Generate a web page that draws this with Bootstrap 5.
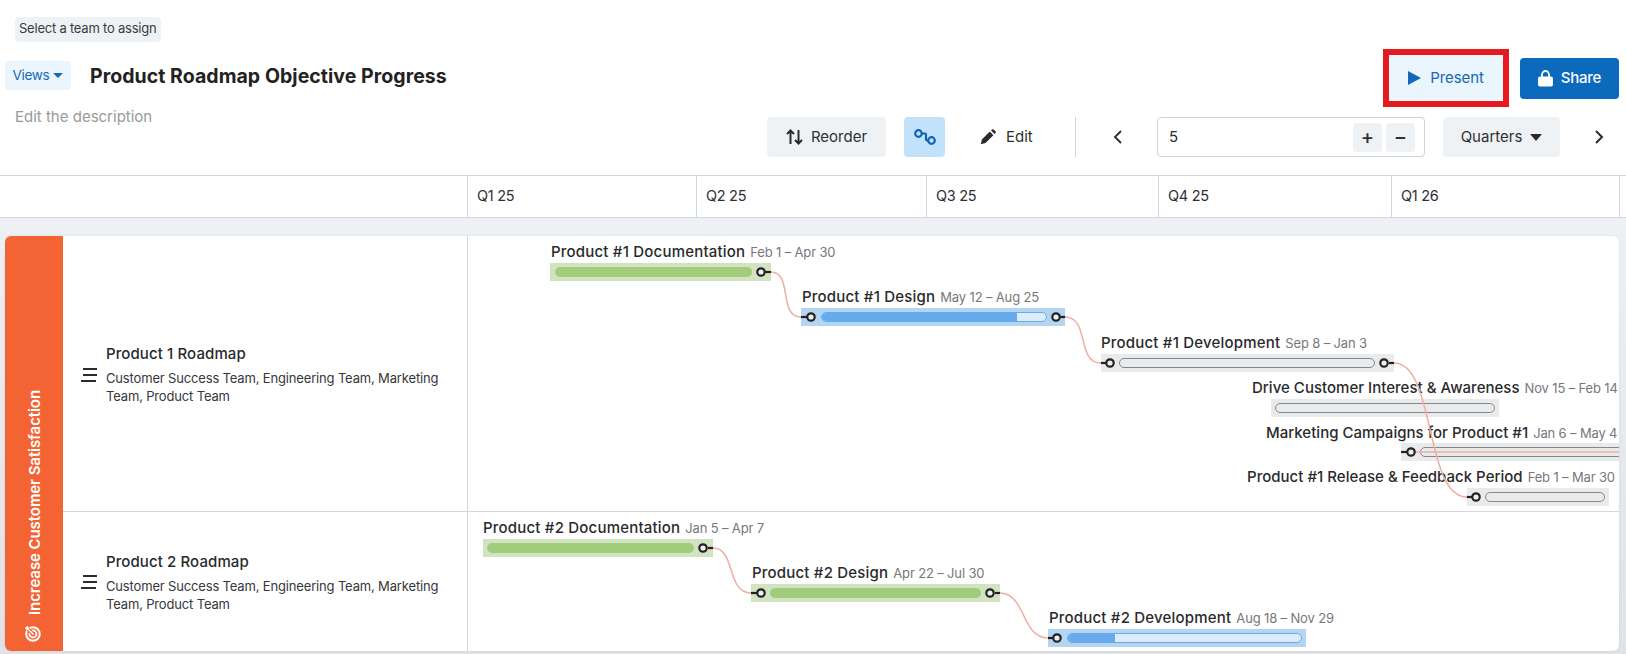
<!doctype html>
<html lang="en"><head><meta charset="utf-8"><title>Roadmap</title>
<link href="https://cdn.jsdelivr.net/npm/bootstrap@5.3.0/dist/css/bootstrap.min.css" rel="stylesheet">
<style>
html,body{height:100%;overflow:hidden}
body{font-family:"Inter","Liberation Sans",sans-serif;color:#2b2b2e;background:#fff;width:1626px;height:654px}
.topzone{height:175px;padding:17px 7px 0 5px}
.teampill{display:block;width:fit-content;margin-left:10px;height:25px;line-height:23px;padding:0 5px 0 4px;background:#eff2f5;border-radius:4px;font-size:13px;letter-spacing:-.22px;color:#3a3a3d}
.headrow{margin-top:14px;height:50px}
.viewsbtn{height:29px;width:66px;padding:0;background:#ebf5fd;color:#1468b5;border:0;border-radius:4px;font-size:13.5px;letter-spacing:-.3px;margin-top:5px}
.viewsbtn::after{content:"";display:inline-block;margin-left:4px;vertical-align:2px;border-left:5px solid transparent;border-right:5px solid transparent;border-top:5px solid currentColor;border-radius:1px}
.qbtn::after{content:"";display:inline-block;margin-left:4px;vertical-align:1px;border-left:6.5px solid transparent;border-right:6.5px solid transparent;border-top:7px solid #2b2b2e;border-radius:1px}
.plantitle{margin:6px 0 0 19px;font-size:19.5px;font-weight:700;line-height:29px;color:#222;letter-spacing:.05px}
.presentwrap{border:6px solid #e5191f;width:126px;height:58px;margin-top:-7px;margin-right:11px}
.presentbtn{width:100%;height:100%;border:0;border-radius:5px;background:#ebf5fd;color:#1468b5;font-size:15px;letter-spacing:-.1px;padding:0;gap:9px}
.sharebtn{width:99px;height:41px;margin-top:2px;background:#0b6abc;color:#fff;border:0;border-radius:4px;font-size:15px;font-weight:500;letter-spacing:-.25px;padding:0}
.descline{margin:1px 0 0 10px;font-size:15px;color:#999;line-height:20px}
.toolrow{margin-top:-10px;height:40px}
.greybtn{height:40px;background:#eff2f5;border:0;border-radius:4px;color:#303033;font-size:15px;padding:0}
.reorderbtn{width:119px}
.linkbtn{width:41px;margin-left:18px;background:#c2e1fb}
.editbtn{width:130px;background:transparent;padding-left:35px;gap:10px}
.vrule{width:1px;height:40px;background:#d4d6d9;margin:0 34px 0 0}
.stepinput{width:268px;height:40px;border:1px solid #cfd2d6;border-radius:4px;margin:0 18px 0 33px;padding:0 9px 0 11px;font-size:15px}
.stepbtn{width:29px;height:29px;background:#eff2f5;border:0;border-radius:4px;padding:0;font-size:20px;font-weight:500;line-height:27px;color:#303033}
.qbtn{width:117px}
.chev{width:14px;height:40px;display:flex;align-items:center;justify-content:center}
.chevend{margin:0 13px 0 32px}
.quarterbar{height:43px;border-top:1px solid #d4d6d9;border-bottom:1px solid #d4d6d9;display:flex}
.quarterlead{width:468px;border-right:1px solid #d4d6d9}
.quartercell{border-right:1px solid #d4d6d9;font-size:14.5px;line-height:40px;padding-left:9px;letter-spacing:-.3px;color:#2f2f33}
.boardzone{height:436px;background:linear-gradient(#eef1f4,#dfe3e6);padding:18px 7px 3px 5px}
.boardcard{height:415px;background:#fff;border-radius:6px;overflow:hidden;box-shadow:0 0 3px rgba(0,0,0,.08)}
.goalband{width:58px;background:#f46333;color:#fff;display:flex;flex-direction:column;align-items:center;justify-content:flex-end;padding:0 0 9px 0}
.goaltext{writing-mode:vertical-rl;transform:rotate(180deg);font-size:15px;font-weight:600;letter-spacing:-.08px;white-space:nowrap;margin:0 0 10px 3px}
.goalicon{margin-right:4px}
.rowone{height:275px}
.rowtwo{height:140px;border-top:1px solid #d4d6d9}
.leadcell{width:405px;flex:none;border-right:1px solid #d4d6d9;display:flex;align-items:center;padding-left:18px;padding-right:25px;gap:9px}
.rowone .leadcell{padding-top:2px}
.rowtwo .leadcell{padding-top:1px}
.roadname{font-size:15px;font-weight:500;line-height:20px;letter-spacing:.1px;color:#2a2a2d;margin-bottom:5px}
.roadteams{font-size:13px;line-height:18px;letter-spacing:-.16px;color:#37373a}
.planecanvas{position:relative;flex:1;overflow:hidden}
.planecanvas svg{position:absolute;left:0;top:0;width:100%;height:100%;pointer-events:none}
.barlabel{position:absolute;white-space:nowrap;font-size:15px;font-weight:500;line-height:18px;letter-spacing:.2px;color:#2a2a2d}
.barlabel.snug{letter-spacing:.02px}
.barlabel span{font-size:13px;font-weight:400;color:#77777c;letter-spacing:-.15px;margin-left:5px}
.barband{position:absolute;height:18px}
.barpill{position:absolute;top:4px;height:10px;border-radius:5px;overflow:hidden}
.tonegreen{background:#d2e3c2}.tonegreen .barpill{background:#a0cc7c}
.toneblue{background:#b4d5f2}.toneblue .barpill{background:#dcecfb;border:1px solid #68abec}
.toneblue .barfill{height:100%;background:#68abec}
.tonegrey{background:#e9eaec}.tonegrey .barpill{background:#e9eaec;border:1px solid #85878b}
.knobs{fill:#eef0f0;stroke:#222;stroke-width:2.2}
.wires{fill:none;stroke:#ecb0a3;stroke-width:1.5}
</style></head><body>
<div class="topzone">
 <div class="teampill">Select a team to assign</div>
 <div class="headrow d-flex align-items-start">
  <button class="viewsbtn" type="button">Views</button>
  <h1 class="plantitle">Product Roadmap Objective Progress</h1>
  <div class="ms-auto d-flex align-items-start">
   <div class="presentwrap"><button class="presentbtn d-flex align-items-center justify-content-center" type="button"><svg width="13" height="14" viewBox="0 0 13 14"><path d="M0 0 13 7 0 14z" fill="#1468b5"/></svg>Present</button></div>
   <button class="sharebtn d-flex align-items-center justify-content-center gap-2" type="button"><svg width="15" height="17" viewBox="0 0 15 17"><path d="M4 7V4.500a3.500 3.500 0 0 1 7 0V7" fill="none" stroke="#fff" stroke-width="1.800"/><rect x="0" y="6.500" width="15" height="10" rx="2" fill="#fff"/></svg>Share</button>
  </div>
 </div>
 <div class="descline">Edit the description</div>
 <div class="toolrow d-flex justify-content-end align-items-center">
  <button class="greybtn reorderbtn d-flex align-items-center justify-content-center gap-2" type="button"><svg width="17" height="16" viewBox="0 0 17 16" fill="none" stroke="#2b2b2e" stroke-width="2"><path d="M4.500 15V2M1 5l3.500-3.500L8 5M12.500 1v13M9 11l3.500 3.500L16 11"/></svg>Reorder</button>
  <button class="greybtn linkbtn d-flex align-items-center justify-content-center" type="button"><svg width="22" height="16" viewBox="0 0 22 16" fill="none" stroke="#0f64b0" stroke-width="2.200"><circle cx="4.500" cy="4.500" r="3.300"/><circle cx="17.500" cy="11.500" r="3.300"/><path d="M8 4.500h3a1 1 0 0 1 1 1v5a1 1 0 0 0 1 1h1"/></svg></button>
  <button class="greybtn editbtn d-flex align-items-center" type="button"><svg width="16" height="16" viewBox="0 0 16 16"><path d="M.8 15.200l1.100-4.700L9.800 2.600l3.600 3.600-7.900 7.900z" fill="#2b2b2e"/><path d="M11 1.400 12 .5a1.300 1.300 0 0 1 1.700 0l1.800 1.800a1.300 1.300 0 0 1 0 1.700l-1 1z" fill="#2b2b2e"/></svg>Edit</button>
  <div class="vrule"></div>
  <div class="chev"><svg width="9" height="14" viewBox="0 0 9 14" fill="none" stroke="#2b2b2e" stroke-width="1.800"><path d="M8 1 2 7l6 6"/></svg></div>
  <div class="stepinput d-flex align-items-center"><span class="me-auto">5</span><button class="stepbtn me-1" type="button">+</button><button class="stepbtn" type="button">−</button></div>
  <button class="greybtn qbtn" type="button">Quarters<span class="ms-1"></span></button>
  <div class="chev chevend"><svg width="9" height="14" viewBox="0 0 9 14" fill="none" stroke="#2b2b2e" stroke-width="2"><path d="M1 1l6 6-6 6"/></svg></div>
 </div>
</div>
<div class="quarterbar">
 <div class="quarterlead"></div>
 <div class="quartercell" style="width:229px">Q1 25</div>
 <div class="quartercell" style="width:230px">Q2 25</div>
 <div class="quartercell" style="width:232px">Q3 25</div>
 <div class="quartercell" style="width:233px">Q4 25</div>
 <div class="quartercell" style="width:228px">Q1 26</div>
</div>
<div class="boardzone">
 <div class="boardcard d-flex">
  <div class="goalband">
   <div class="goaltext">Increase Customer Satisfaction</div>
   <svg class="goalicon" width="17" height="17" viewBox="0 0 17 17" fill="none"><circle cx="9" cy="9" r="6.800" stroke="#fff" stroke-width="2"/><circle cx="9" cy="9" r="3.500" stroke="#fff" stroke-width="1.800"/><circle cx="9" cy="9" r="1" fill="#fff"/><path d="M9 9 2 2" stroke="#f46333" stroke-width="3.500"/><path d="M9 9 4 4" stroke="#fff" stroke-width="1.300"/><path d="M.8 3.300 3.300.8 5 3 5 5 3 5z" fill="#fff"/></svg>
  </div>
  <div class="flex-grow-1 d-flex flex-column">
   <div class="rowone d-flex">
    <div class="leadcell">
     <svg width="16" height="14" viewBox="0 0 16 14" fill="#2b2b2e" class="flex-shrink-0"><rect x="2" y="0" width="14" height="2"/><rect x="2" y="6" width="14" height="2"/><rect x="0" y="12" width="15" height="2"/></svg>
     <div><div class="roadname">Product 1 Roadmap</div><div class="roadteams">Customer Success Team, Engineering Team, Marketing Team, Product Team</div></div>
    </div>
    <div class="planecanvas">
     <div class="barlabel" style="left:83px;top:7px">Product #1 Documentation<span>Feb 1 – Apr 30</span></div>
     <div class="barband tonegreen" style="left:82px;top:27px;width:221px"><div class="barpill" style="left:5px;width:197px"></div></div>
     <div class="barlabel" style="left:334px;top:52px">Product #1 Design<span>May 12 – Aug 25</span></div>
     <div class="barband toneblue" style="left:333px;top:72px;width:264px"><div class="barpill" style="left:20px;width:226px"><div class="barfill" style="width:87%"></div></div></div>
     <div class="barlabel" style="left:633px;top:98px">Product #1 Development<span>Sep 8 – Jan 3</span></div>
     <div class="barband tonegrey" style="left:633px;top:118px;width:293px"><div class="barpill" style="left:18px;width:256px"></div></div>
     <div class="barlabel snug" style="left:784px;top:143px">Drive Customer Interest &amp; Awareness<span>Nov 15 – Feb 14</span></div>
     <div class="barband tonegrey" style="left:803px;top:163px;width:228px"><div class="barpill" style="left:4px;width:220px"></div></div>
     <div class="barlabel snug" style="left:798px;top:188px">Marketing Campaigns for Product #1<span>Jan 6 – May 4</span></div>
     <div class="barband tonegrey" style="left:933px;top:207px;width:220px"><div class="barpill" style="left:19px;width:220px"></div></div>
     <div class="barlabel snug" style="left:779px;top:232px">Product #1 Release &amp; Feedback Period<span>Feb 1 – Mar 30</span></div>
     <div class="barband tonegrey" style="left:999px;top:252px;width:142px"><div class="barpill" style="left:18px;width:120px"></div></div>
     <svg viewBox="0 0 1151 275">
      <g class="wires">
       <path d="M303 36C325 36 310 81 333 81"/>
       <path d="M597 81C622 81 608 127 633 127"/>
       <path d="M926 127C968 127 956 261 999 261"/>
       <path d="M933 216H1151"/>
      </g>
      <g class="knobs">
       <path d="M297 36h6"/><circle cx="293" cy="36" r="3.700"/>
       <path d="M333 81h6"/><circle cx="343" cy="81" r="3.700"/>
       <path d="M592 81h5"/><circle cx="588" cy="81" r="3.700"/>
       <path d="M633 127h5"/><circle cx="642" cy="127" r="3.700"/>
       <path d="M921 127h5"/><circle cx="916" cy="127" r="3.700"/>
       <path d="M933 216h6"/><circle cx="943" cy="216" r="3.700"/>
       <path d="M999 261h5"/><circle cx="1008" cy="261" r="3.700"/>
      </g>
     </svg>
    </div>
   </div>
   <div class="rowtwo d-flex">
    <div class="leadcell">
     <svg width="16" height="14" viewBox="0 0 16 14" fill="#2b2b2e" class="flex-shrink-0"><rect x="2" y="0" width="14" height="2"/><rect x="2" y="6" width="14" height="2"/><rect x="0" y="12" width="15" height="2"/></svg>
     <div><div class="roadname">Product 2 Roadmap</div><div class="roadteams">Customer Success Team, Engineering Team, Marketing Team, Product Team</div></div>
    </div>
    <div class="planecanvas">
     <div class="barlabel" style="left:15px;top:7px">Product #2 Documentation<span>Jan 5 – Apr 7</span></div>
     <div class="barband tonegreen" style="left:15px;top:27px;width:230px"><div class="barpill" style="left:4px;width:207px"></div></div>
     <div class="barlabel" style="left:284px;top:52px">Product #2 Design<span>Apr 22 – Jul 30</span></div>
     <div class="barband tonegreen" style="left:283px;top:72px;width:249px"><div class="barpill" style="left:19px;width:211px"></div></div>
     <div class="barlabel" style="left:581px;top:97px">Product #2 Development<span>Aug 18 – Nov 29</span></div>
     <div class="barband toneblue" style="left:580px;top:117px;width:258px"><div class="barpill" style="left:19px;width:235px"><div class="barfill" style="width:20%"></div></div></div>
     <svg viewBox="0 0 1151 139">
      <g class="wires">
       <path d="M245 36C268 36 258 81 283 81"/>
       <path d="M532 81C558 81 553 126 580 126"/>
      </g>
      <g class="knobs">
       <path d="M240 36h5"/><circle cx="235" cy="36" r="3.700"/>
       <path d="M283 81h6"/><circle cx="293" cy="81" r="3.700"/>
       <path d="M527 81h5"/><circle cx="522" cy="81" r="3.700"/>
       <path d="M580 126h6"/><circle cx="589" cy="126" r="3.700"/>
      </g>
     </svg>
    </div>
   </div>
  </div>
 </div>
</div>
<script src="https://cdn.jsdelivr.net/npm/bootstrap@5.3.0/dist/js/bootstrap.bundle.min.js"></script>
</body></html>
